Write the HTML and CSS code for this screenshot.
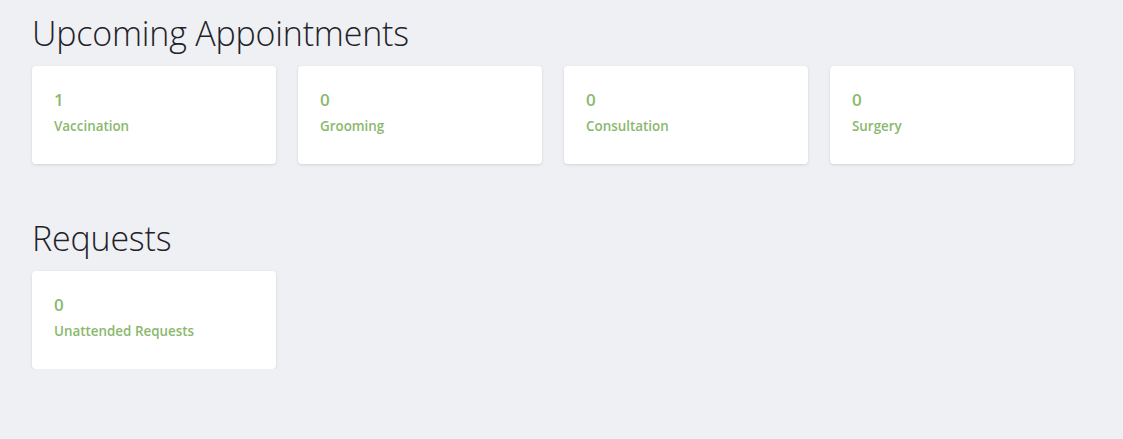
FILE: index.html
```html
<!DOCTYPE html>
<html>
<head>
<meta charset="utf-8">
<link rel="stylesheet" href="styles.css">
</head>
<body>
<main class="page">
  <section class="section">
    <h2 class="section-title">Upcoming Appointments</h2>
    <div class="cards">
      <div class="card"><div class="num">1</div><div class="label">Vaccination</div></div>
      <div class="card"><div class="num">0</div><div class="label">Grooming</div></div>
      <div class="card"><div class="num">0</div><div class="label">Consultation</div></div>
      <div class="card"><div class="num">0</div><div class="label">Surgery</div></div>
    </div>
  </section>
  <section class="section section-requests">
    <h2 class="section-title">Requests</h2>
    <div class="cards">
      <div class="card"><div class="num">0</div><div class="label">Unattended Requests</div></div>
    </div>
  </section>
</main>
</body>
</html>
```

FILE: styles.css
```css
html, body {
  margin: 0;
  padding: 0;
  background: #eff0f4;
  font-family: "Open Sans", "Noto Sans", sans-serif;
}
.page {
  padding: 10px 32px 0 32px;
}
.section-title {
  margin: 0;
  font-weight: 300;
  font-size: 34px;
  line-height: 46px;
  color: #1f2329;
  letter-spacing: -0.2px;
}
.section-requests {
  margin-top: 51px;
}
.cards {
  display: flex;
  gap: 22px;
  margin-top: 10px;
}
.card {
  width: 244px;
  height: 98px;
  box-sizing: border-box;
  background: #fff;
  border-radius: 4px;
  box-shadow: 0 1px 3px rgba(0,0,0,0.12);
  padding: 22px 22px;
  color: #8ab86e;
  font-weight: 600;
}
.num {
  font-size: 17px;
  line-height: 24px;
}
.label {
  font-size: 13.4px;
  line-height: 20px;
  margin-top: 4px;
}
```
